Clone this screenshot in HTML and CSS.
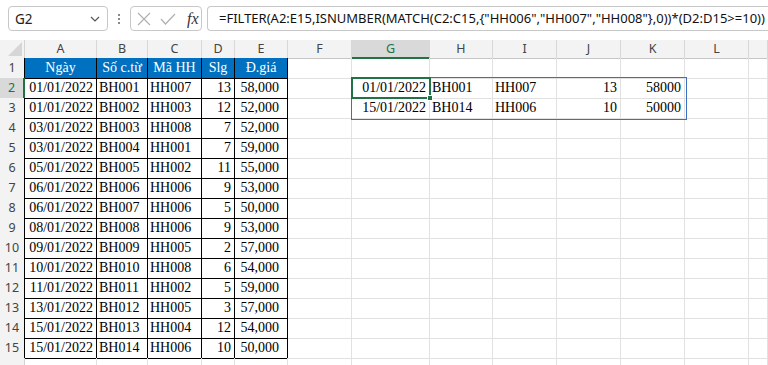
FILE: index.html
```html
<!DOCTYPE html>
<html lang="vi">
<head>
<meta charset="utf-8">
<title>Excel FILTER</title>
<link rel="stylesheet" href="styles.css">
</head>
<body>
<div class="toolbar">
  <div class="namebox"><span>G2</span>
    <svg class="chev" width="10" height="6" viewBox="0 0 10 6"><path d="M1 1 L5 5 L9 1" fill="none" stroke="#555" stroke-width="1.2"/></svg>
  </div>
  <div class="dots"><i></i><i></i><i></i></div>
  <div class="fxbox">
    <svg width="14" height="14" viewBox="0 0 14 14"><path d="M1 1 L13 13 M13 1 L1 13" stroke="#b0b0b0" stroke-width="1.2" fill="none"/></svg>
    <svg width="16" height="12" viewBox="0 0 16 12"><path d="M1 6 L5.5 11 L15 1" stroke="#b0b0b0" stroke-width="1.2" fill="none"/></svg>
    <span class="fx">fx</span>
  </div>
  <div class="formula">=FILTER(A2:E15,ISNUMBER(MATCH(C2:C15,{"HH006","HH007","HH008"},0))*(D2:D15&gt;=10))</div>
</div>

<div class="sheet">
  <div class="row colhead">
    <div class="corner"><svg width="14" height="14" viewBox="0 0 14 14"><path d="M14 0 L14 14 L0 14 Z" fill="#d6d6d6"/></svg></div>
    <div class="ch">A</div><div class="ch">B</div><div class="ch">C</div><div class="ch">D</div><div class="ch">E</div><div class="ch">F</div><div class="ch sel">G</div><div class="ch">H</div><div class="ch">I</div><div class="ch">J</div><div class="ch">K</div><div class="ch">L</div><div class="ch"></div>
  </div>

  <div class="row">
    <div class="rh tb">1</div>
    <div class="c t th">Ngày</div><div class="c t th">Số c.từ</div><div class="c t th">Mã HH</div><div class="c t th">Slg</div><div class="c t th">Đ.giá</div>
    <div class="c"></div><div class="c"></div><div class="c"></div><div class="c"></div><div class="c"></div><div class="c"></div><div class="c"></div><div class="c"></div>
  </div>

  <div class="row">
    <div class="rh tb act">2</div>
    <div class="c t r">01/01/2022</div><div class="c t">BH001</div><div class="c t">HH007</div><div class="c t r">13</div><div class="c t n">58,000</div>
    <div class="c"></div>
    <div class="c r spill">01/01/2022
      <div class="active"><span class="handle"></span></div>
    </div>
    <div class="c">BH001</div><div class="c">HH007</div><div class="c r">13</div><div class="c r">58000</div><div class="c"></div><div class="c"></div>
  </div>

  <div class="row">
    <div class="rh tb">3</div>
    <div class="c t r">01/01/2022</div><div class="c t">BH002</div><div class="c t">HH003</div><div class="c t r">12</div><div class="c t n">52,000</div>
    <div class="c"></div>
    <div class="c r">15/01/2022</div><div class="c">BH014</div><div class="c">HH006</div><div class="c r">10</div><div class="c r">50000</div><div class="c"></div><div class="c"></div>
  </div>

  <div class="row">
    <div class="rh tb">4</div>
    <div class="c t r">03/01/2022</div><div class="c t">BH003</div><div class="c t">HH008</div><div class="c t r">7</div><div class="c t n">52,000</div>
    <div class="c"></div><div class="c"></div><div class="c"></div><div class="c"></div><div class="c"></div><div class="c"></div><div class="c"></div><div class="c"></div>
  </div>

  <div class="row">
    <div class="rh tb">5</div>
    <div class="c t r">03/01/2022</div><div class="c t">BH004</div><div class="c t">HH001</div><div class="c t r">7</div><div class="c t n">59,000</div>
    <div class="c"></div><div class="c"></div><div class="c"></div><div class="c"></div><div class="c"></div><div class="c"></div><div class="c"></div><div class="c"></div>
  </div>

  <div class="row">
    <div class="rh tb">6</div>
    <div class="c t r">05/01/2022</div><div class="c t">BH005</div><div class="c t">HH002</div><div class="c t r">11</div><div class="c t n">55,000</div>
    <div class="c"></div><div class="c"></div><div class="c"></div><div class="c"></div><div class="c"></div><div class="c"></div><div class="c"></div><div class="c"></div>
  </div>

  <div class="row">
    <div class="rh tb">7</div>
    <div class="c t r">06/01/2022</div><div class="c t">BH006</div><div class="c t">HH006</div><div class="c t r">9</div><div class="c t n">53,000</div>
    <div class="c"></div><div class="c"></div><div class="c"></div><div class="c"></div><div class="c"></div><div class="c"></div><div class="c"></div><div class="c"></div>
  </div>

  <div class="row">
    <div class="rh tb">8</div>
    <div class="c t r">06/01/2022</div><div class="c t">BH007</div><div class="c t">HH006</div><div class="c t r">5</div><div class="c t n">50,000</div>
    <div class="c"></div><div class="c"></div><div class="c"></div><div class="c"></div><div class="c"></div><div class="c"></div><div class="c"></div><div class="c"></div>
  </div>

  <div class="row">
    <div class="rh tb">9</div>
    <div class="c t r">08/01/2022</div><div class="c t">BH008</div><div class="c t">HH006</div><div class="c t r">9</div><div class="c t n">53,000</div>
    <div class="c"></div><div class="c"></div><div class="c"></div><div class="c"></div><div class="c"></div><div class="c"></div><div class="c"></div><div class="c"></div>
  </div>

  <div class="row">
    <div class="rh tb">10</div>
    <div class="c t r">09/01/2022</div><div class="c t">BH009</div><div class="c t">HH005</div><div class="c t r">2</div><div class="c t n">57,000</div>
    <div class="c"></div><div class="c"></div><div class="c"></div><div class="c"></div><div class="c"></div><div class="c"></div><div class="c"></div><div class="c"></div>
  </div>

  <div class="row">
    <div class="rh tb">11</div>
    <div class="c t r">10/01/2022</div><div class="c t">BH010</div><div class="c t">HH008</div><div class="c t r">6</div><div class="c t n">54,000</div>
    <div class="c"></div><div class="c"></div><div class="c"></div><div class="c"></div><div class="c"></div><div class="c"></div><div class="c"></div><div class="c"></div>
  </div>

  <div class="row">
    <div class="rh tb">12</div>
    <div class="c t r">11/01/2022</div><div class="c t">BH011</div><div class="c t">HH002</div><div class="c t r">5</div><div class="c t n">59,000</div>
    <div class="c"></div><div class="c"></div><div class="c"></div><div class="c"></div><div class="c"></div><div class="c"></div><div class="c"></div><div class="c"></div>
  </div>

  <div class="row">
    <div class="rh tb">13</div>
    <div class="c t r">13/01/2022</div><div class="c t">BH012</div><div class="c t">HH005</div><div class="c t r">3</div><div class="c t n">57,000</div>
    <div class="c"></div><div class="c"></div><div class="c"></div><div class="c"></div><div class="c"></div><div class="c"></div><div class="c"></div><div class="c"></div>
  </div>

  <div class="row">
    <div class="rh tb">14</div>
    <div class="c t r">15/01/2022</div><div class="c t">BH013</div><div class="c t">HH004</div><div class="c t r">12</div><div class="c t n">54,000</div>
    <div class="c"></div><div class="c"></div><div class="c"></div><div class="c"></div><div class="c"></div><div class="c"></div><div class="c"></div><div class="c"></div>
  </div>

  <div class="row">
    <div class="rh tb">15</div>
    <div class="c t r">15/01/2022</div><div class="c t">BH014</div><div class="c t">HH006</div><div class="c t r">10</div><div class="c t n">50,000</div>
    <div class="c"></div><div class="c"></div><div class="c"></div><div class="c"></div><div class="c"></div><div class="c"></div><div class="c"></div><div class="c"></div>
  </div>

  <div class="row">
    <div class="rh"></div>
    <div class="c"></div><div class="c"></div><div class="c"></div><div class="c"></div><div class="c"></div>
    <div class="c"></div><div class="c"></div><div class="c"></div><div class="c"></div><div class="c"></div><div class="c"></div><div class="c"></div><div class="c"></div>
  </div>
</div>
</body>
</html>
```

FILE: styles.css
```css
* { box-sizing: border-box; }
html, body { margin: 0; padding: 0; }
body {
  width: 768px;
  height: 365px;
  overflow: hidden;
  background: #ffffff;
  font-family: "Liberation Serif", "Times New Roman", serif;
}

/* ---------- formula bar ---------- */
.toolbar {
  height: 40px;
  display: flex;
  align-items: flex-start;
  padding-top: 6px;
  background: #ffffff;
  font-family: "Noto Sans", "Liberation Sans", sans-serif;
}
.namebox {
  margin-left: 8px;
  width: 100px;
  height: 25px;
  border: 1px solid #c8c8c8;
  border-radius: 4px;
  display: flex;
  align-items: center;
  justify-content: space-between;
  padding: 0 7px 0 6px;
  font-size: 13.5px;
  color: #222;
  background: #fff;
}
.dots {
  width: 22px;
  height: 25px;
  display: flex;
  flex-direction: column;
  align-items: center;
  justify-content: center;
  gap: 2px;
}
.dots i {
  display: block;
  width: 2px;
  height: 2px;
  background: #8a8a8a;
}
.fxbox {
  width: 72px;
  height: 25px;
  border: 1px solid #c8c8c8;
  border-radius: 4px;
  display: flex;
  align-items: center;
  gap: 9px;
  padding-left: 6px;
  background: #fff;
}
.fx {
  font-family: "Liberation Serif", serif;
  font-style: italic;
  font-size: 16px;
  color: #333;
  margin-left: 2px;
}
.formula {
  margin-left: 5px;
  flex: 1;
  height: 25px;
  border: 1px solid #c8c8c8;
  border-right: none;
  border-radius: 4px 0 0 4px;
  padding-left: 11px;
  font-size: 13px;
  line-height: 23px;
  color: #111;
  white-space: nowrap;
  overflow: hidden;
  background: #fff;
}

/* ---------- grid ---------- */
.sheet { width: 768px; }
.row {
  display: grid;
  grid-template-columns: 25px 72px 51px 54px 33px 53px 64px 78px 63px 64px 64px 64px 64px 19px;
  height: 20px;
}
.colhead {
  height: 18px;
  background: #f3f3f3;
  font-family: "Noto Sans", "Liberation Sans", sans-serif;
  font-size: 12.5px;
  color: #444;
}
.corner {
  border-right: 1px solid #d4d4d4;
  border-bottom: 1px solid #c6c6c6;
  display: flex;
  align-items: flex-end;
  justify-content: flex-end;
  padding: 0 2px 2px 0;
}
.ch {
  border-right: 1px solid #d8d8d8;
  border-bottom: 1px solid #c6c6c6;
  text-align: center;
  line-height: 17px;
}
.ch.sel {
  background: #d9d9d9;
  color: #217346;
  border-bottom: 2px solid #217346;
}

.rh {
  background: #f3f3f3;
  border-right: 1px solid #d4d4d4;
  border-bottom: 1px solid #d8d8d8;
  font-family: "Noto Sans", "Liberation Sans", sans-serif;
  font-size: 12.5px;
  color: #444;
  text-align: center;
  line-height: 20px;
}
.rh.tb { border-right-color: #000; }
.rh.act {
  background: #d9d9d9;
  color: #217346;
  border-right: 2px solid #217346;
}

.c {
  border-right: 1px solid #e1e1e1;
  border-bottom: 1px solid #e1e1e1;
  font-size: 14px;
  line-height: 20px;
  padding: 0 2px;
  white-space: nowrap;
  color: #000;
}
.c.r { text-align: right; padding-right: 3px; }
.c.n { text-align: right; padding-right: 8px; }
.c.t {
  border-right-color: #000;
  border-bottom-color: #000;
}
.c.th {
  background: #0070c0;
  color: #fff;
  text-align: center;
}

/* spill range + active cell overlays */
.spill { position: relative; }
.spill::before {
  content: "";
  position: absolute;
  left: -1px;
  top: -1px;
  width: 334px;
  height: 41px;
  border: 1px solid #3b6fc4;
  pointer-events: none;
}
.active {
  position: absolute;
  left: -1px;
  top: -1px;
  width: 80px;
  height: 22px;
  border: 2px solid #217346;
  pointer-events: none;
}
.handle {
  position: absolute;
  right: -4px;
  bottom: -4px;
  width: 6px;
  height: 6px;
  background: #217346;
  border: 1px solid #fff;
}
```
